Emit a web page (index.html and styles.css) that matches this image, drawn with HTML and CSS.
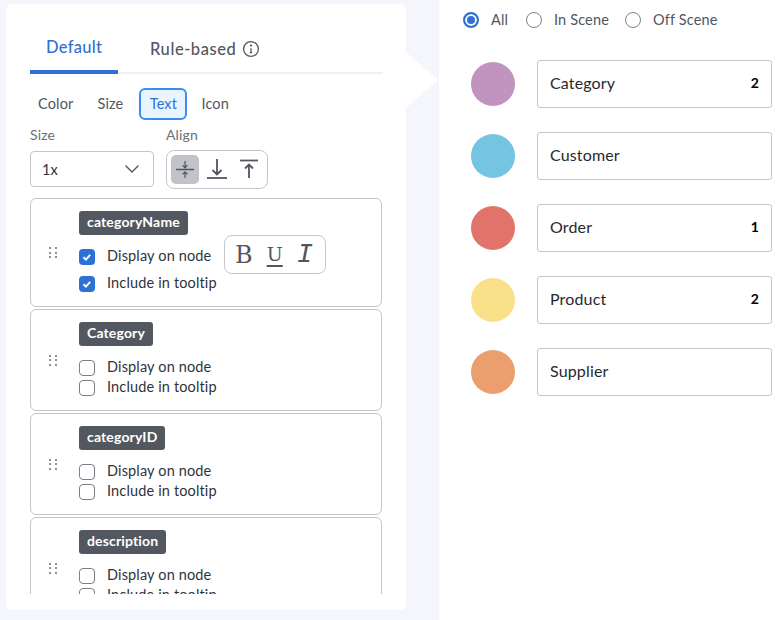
FILE: index.html
```html
<!DOCTYPE html>
<html>

<head>
    <title>Legend settings</title>
    <meta charset="utf-8">
    <link rel="stylesheet" href="styles.css">
</head>

<body>
    <div class="left_side">
        <div class="panel">
            <div class="tabs">
                <div class="tab active">Default</div>
                <div class="tab">Rule-based
                    <svg class="info" width="18" height="18" viewBox="0 0 18 18" fill="none" stroke="#51565f" stroke-width="1.3">
                        <circle cx="9" cy="9" r="7.4" />
                        <path d="M9 8.2v4.4M7.8 12.6h2.4" />
                        <circle cx="9" cy="5.6" r=".5" fill="#51565f" />
                    </svg>
                </div>
            </div>
            <div class="sub_tabs">
                <div class="sub_tab">Color</div>
                <div class="sub_tab">Size</div>
                <div class="sub_tab selected">Text</div>
                <div class="sub_tab">Icon</div>
            </div>
            <div class="controls">
                <div class="size_col">
                    <div class="label">Size</div>
                    <div class="select">1x
                        <svg width="16" height="10" viewBox="0 0 16 10" fill="none" stroke="#51565f" stroke-width="1.4">
                            <path d="M1.5 1.5 8 8l6.500-6.500" />
                        </svg>
                    </div>
                </div>
                <div class="align_col">
                    <div class="label">Align</div>
                    <div class="align_box">
                        <div class="align_btn on">
                            <svg width="28" height="29" viewBox="0 0 28 29" fill="none" stroke="#51565f" stroke-width="1.2">
                                <path d="M5 14.500h18" stroke-width="1.500" />
                                <path d="M14 6v6.500M11.500 10.200 14 12.800l2.500-2.600M14 23v-6M11.500 19.300 14 16.800l2.500 2.500" />
                            </svg>
                        </div>
                        <div class="align_btn">
                            <svg width="24" height="29" viewBox="0 0 24 29" fill="none" stroke="#51565f" stroke-width="1.800">
                                <path d="M2 23h20" />
                                <path d="M12 4v15M7.500 15l4.500 4.500 4.500-4.500" />
                            </svg>
                        </div>
                        <div class="align_btn third">
                            <svg width="22" height="29" viewBox="0 0 22 29" fill="none" stroke="#51565f" stroke-width="1.800">
                                <path d="M2 5.500h18" />
                                <path d="M11 23V9.500M7 13.500l4-4 4 4" />
                            </svg>
                        </div>
                    </div>
                </div>
            </div>
            <div class="card_list">
                <div class="card first">
                    <div class="handle"><i></i><i></i><i></i><i></i><i></i><i></i></div>
                    <div class="card_body">
                        <span class="badge">categoryName</span>
                        <div class="check_rows">
                            <div class="check_row">
                                <span class="check on"><svg width="16" height="16" viewBox="0 0 16 16" fill="none" stroke="#fff" stroke-width="2"><path d="m4.500 8.300 2.400 2.300 4.300-4.800" /></svg></span>
                                Display on node
                                <div class="style_box"><span class="b">B</span><span class="u">U</span><span class="i">I</span></div>
                            </div>
                            <div class="check_row">
                                <span class="check on"><svg width="16" height="16" viewBox="0 0 16 16" fill="none" stroke="#fff" stroke-width="2"><path d="m4.500 8.300 2.400 2.300 4.300-4.800" /></svg></span>
                                Include in tooltip
                            </div>
                        </div>
                    </div>
                </div>
                <div class="card">
                    <div class="handle"><i></i><i></i><i></i><i></i><i></i><i></i></div>
                    <div class="card_body">
                        <span class="badge">Category</span>
                        <div class="check_rows">
                            <div class="check_row"><span class="check"></span>Display on node</div>
                            <div class="check_row"><span class="check"></span>Include in tooltip</div>
                        </div>
                    </div>
                </div>
                <div class="card">
                    <div class="handle"><i></i><i></i><i></i><i></i><i></i><i></i></div>
                    <div class="card_body">
                        <span class="badge">categoryID</span>
                        <div class="check_rows">
                            <div class="check_row"><span class="check"></span>Display on node</div>
                            <div class="check_row"><span class="check"></span>Include in tooltip</div>
                        </div>
                    </div>
                </div>
                <div class="card">
                    <div class="handle"><i></i><i></i><i></i><i></i><i></i><i></i></div>
                    <div class="card_body">
                        <span class="badge">description</span>
                        <div class="check_rows">
                            <div class="check_row"><span class="check"></span>Display on node</div>
                            <div class="check_row"><span class="check"></span>Include in tooltip</div>
                        </div>
                    </div>
                </div>
            </div>
        </div>
        <div class="arrow"></div>
    </div>

    <div class="right_side">
        <div class="radios">
            <div class="radio_item"><span class="radio on"></span>All</div>
            <div class="radio_item"><span class="radio"></span>In Scene</div>
            <div class="radio_item"><span class="radio"></span>Off Scene</div>
        </div>
        <div class="legend">
            <div class="legend_row">
                <span class="dot" style="background-color: #C194BF"></span>
                <div class="name_box">Category<b>2</b></div>
            </div>
            <div class="legend_row">
                <span class="dot" style="background-color: #75C4E1"></span>
                <div class="name_box">Customer</div>
            </div>
            <div class="legend_row">
                <span class="dot" style="background-color: #E2736B"></span>
                <div class="name_box">Order<b>1</b></div>
            </div>
            <div class="legend_row">
                <span class="dot" style="background-color: #FBE08A"></span>
                <div class="name_box">Product<b>2</b></div>
            </div>
            <div class="legend_row">
                <span class="dot" style="background-color: #EB9F6E"></span>
                <div class="name_box">Supplier</div>
            </div>
        </div>
    </div>
</body>

</html>
```

FILE: styles.css
```css
html,
body {
    margin: 0;
    height: 620px;
    overflow: hidden;
}

body {
    display: flex;
    font-family: "Lato", "Noto Sans", sans-serif;
    font-size: 14.5px;
    letter-spacing: .15px;
    color: #30343b;
    background-color: #FFFFFF;
}

.left_side {
    position: relative;
    box-sizing: border-box;
    width: 439px;
    height: 620px;
    padding: 4px 0 10px 6px;
    background-color: #F4F6FB;
}

.panel {
    box-sizing: border-box;
    width: 400px;
    height: 606px;
    padding: 24px 24px 16px;
    background-color: #FFFFFF;
    border-radius: 6px;
    display: flex;
    flex-direction: column;
}

.arrow {
    position: absolute;
    left: 406px;
    top: 52px;
    width: 32px;
    height: 56px;
    background-color: #FFFFFF;
    clip-path: polygon(0 0, 100% 50%, 0 100%);
}

.tabs {
    box-sizing: border-box;
    display: flex;
    height: 46px;
    border-bottom: 2px solid #EEF0F5;
    margin-right: -1px;
}

.tab {
    box-sizing: border-box;
    display: flex;
    align-items: center;
    height: 44px;
    padding: 0 0 2px 16px;
    margin-right: 16px;
    font-size: 16.500px;
    font-weight: 500;
    letter-spacing: .55px;
    color: #51565f;
    white-space: nowrap;
}

.tab.active {
    width: 88px;
    height: 46px;
    padding-bottom: 4px;
    letter-spacing: .3px;
    color: #2D71D6;
    border-bottom: 4px solid #2D71D6;
    border-radius: 3px 3px 0 0;
}

.info {
    margin-left: 6px;
}

.sub_tabs {
    display: flex;
    align-items: center;
    margin-top: 14px;
    height: 32px;
    color: #51565f;
}

.sub_tab {
    box-sizing: border-box;
    height: 32px;
    line-height: 32px;
    padding: 0 12px 0 8px;
    margin-right: 6px;
}

.sub_tab:first-child {
    margin-right: 4px;
}

.sub_tab:nth-child(2) {
    padding-right: 8px;
    margin-right: 8px;
}

.sub_tab.selected {
    width: 48px;
    padding: 0;
    margin-right: 6px;
    line-height: 28px;
    text-align: center;
    color: #2D71D6;
    background-color: #E8F4FF;
    border: 2px solid #3D8BF2;
    border-radius: 6px;
}

.controls {
    display: flex;
    gap: 12px;
    margin-top: 6px;
}

.label {
    height: 24px;
    line-height: 18px;
    font-size: 14px;
    color: #6a6f78;
}

.size_col .label {
    height: 25px;
}

.select {
    box-sizing: border-box;
    display: flex;
    justify-content: space-between;
    align-items: center;
    width: 124px;
    height: 36px;
    padding: 0 13px 0 11px;
    border: 1px solid #C4C6CC;
    border-radius: 4px;
    color: #30343b;
}

.align_box {
    box-sizing: border-box;
    display: flex;
    align-items: center;
    gap: 6px;
    width: 102px;
    height: 39px;
    padding: 0 4px;
    border: 1px solid #C4C6CC;
    border-radius: 8px;
}

.align_btn {
    display: flex;
    border-radius: 5px;
}

.align_btn.on {
    background-color: #C1C3C8;
}

.align_btn.third {
    margin-left: 3px;
}

.card_list {
    flex-grow: 1;
    min-height: 0;
    margin-top: 9px;
    overflow: hidden;
    display: flex;
    flex-direction: column;
    gap: 2px;
}

.card {
    box-sizing: border-box;
    flex-shrink: 0;
    display: flex;
    align-items: center;
    height: 102px;
    padding: 0 0 0 18px;
    border: 1px solid #C4C6CC;
    border-radius: 6px;
}

.card.first {
    height: 109px;
}

.handle {
    display: grid;
    grid-template-columns: 2px 2px;
    gap: 2.500px 4px;
    width: 8px;
    margin-right: 22px;
}

.handle i {
    width: 2px;
    height: 2px;
    background-color: #8d9096;
}

.card_body {
    align-self: flex-start;
    padding-top: 12px;
}

.badge {
    display: inline-block;
    height: 24px;
    line-height: 22px;
    padding: 0 8px;
    font-size: 14px;
    font-weight: 700;
    color: #FFFFFF;
    background-color: #535860;
    border-radius: 3px;
}

.check_rows {
    margin-top: 14px;
    display: flex;
    flex-direction: column;
    gap: 4px;
}

.first .check_rows {
    gap: 11px;
}

.check_row {
    position: relative;
    display: flex;
    align-items: flex-start;
    height: 16px;
    line-height: 14px;
    white-space: nowrap;
}

.check {
    box-sizing: border-box;
    flex-shrink: 0;
    width: 16px;
    height: 16px;
    margin-right: 12px;
    border: 1px solid #7b7f87;
    border-radius: 4px;
    background-color: #FFFFFF;
}

.check.on {
    border: 0;
    background-color: #2D71D6;
}

.check svg {
    display: block;
}

.style_box {
    position: absolute;
    left: 145px;
    top: -14px;
    box-sizing: border-box;
    display: flex;
    align-items: center;
    justify-content: space-between;
    width: 102px;
    height: 39px;
    padding: 0 12px 0 10px;
    border: 1px solid #C4C6CC;
    border-radius: 8px;
    font-family: "DejaVu Serif", serif;
    letter-spacing: 0;
    color: #51565f;
}

.style_box .b {
    font-size: 24px;
}

.style_box .u {
    font-size: 19px;
    line-height: 19px;
    text-decoration: underline;
    text-decoration-thickness: 1.500px;
    text-underline-offset: 4px;
}

.style_box .i {
    font-family: "Liberation Mono", monospace;
    font-size: 27px;
    font-style: italic;
}

.right_side {
    flex-grow: 1;
    padding: 10px 9px 0 24px;
}

.radios {
    display: flex;
    height: 18px;
    color: #51565f;
}

.radio_item {
    display: flex;
    align-items: center;
}

.radio_item:first-child {
    width: 63px;
}

.radio_item:nth-child(2) {
    width: 99px;
}

.radio {
    box-sizing: border-box;
    width: 16px;
    height: 16px;
    margin: 2px 12px 0 0;
    border: 1px solid #7b7f87;
    border-radius: 50%;
}

.radio.on {
    border: 2px solid #2D71D6;
    background-color: #2D71D6;
    box-shadow: inset 0 0 0 2px #FFFFFF;
}

.legend {
    display: flex;
    flex-direction: column;
    gap: 24px;
    margin-top: 32px;
}

.legend_row {
    display: flex;
    align-items: center;
    padding-left: 8px;
}

.dot {
    width: 44px;
    height: 44px;
    margin-right: 22px;
    border-radius: 50%;
}

.name_box {
    box-sizing: border-box;
    flex-grow: 1;
    display: flex;
    justify-content: space-between;
    align-items: center;
    height: 48px;
    padding: 0 12px 4px;
    border: 1px solid #C4C6CC;
    border-radius: 3px;
    font-size: 16px;
    color: #262a30;
}

.name_box b {
    font-size: 14px;
    color: #000000;
}
```
